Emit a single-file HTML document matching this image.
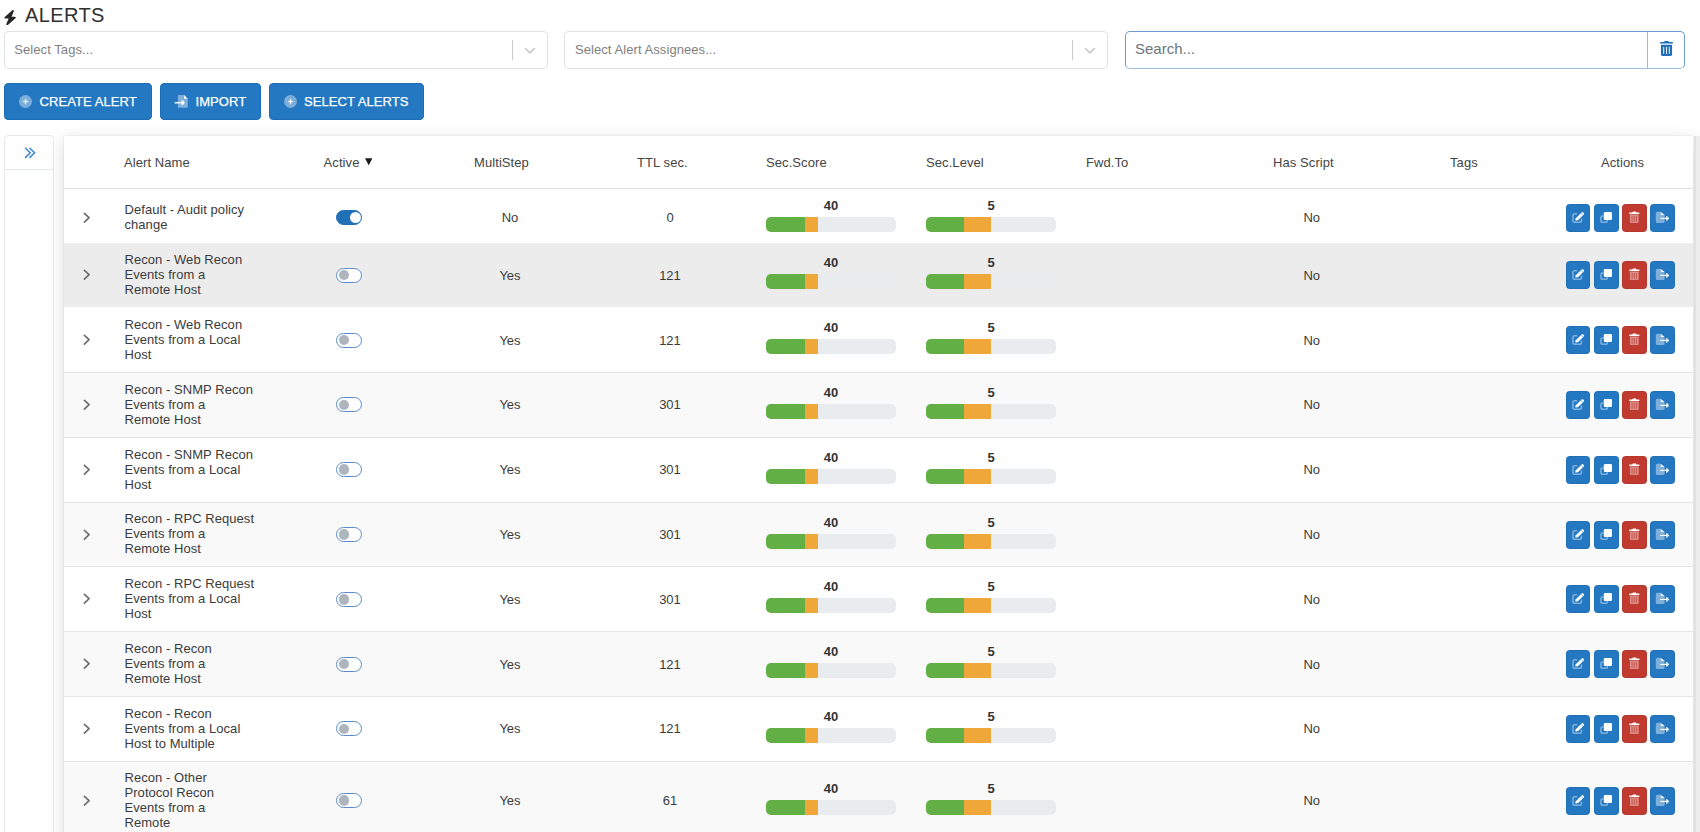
<!DOCTYPE html>
<html><head><meta charset="utf-8"><title>Alerts</title>
<style>
*{box-sizing:border-box;margin:0;padding:0}
html,body{width:1700px;height:832px;overflow:hidden;background:#fff;font-family:"Liberation Sans",sans-serif;color:#3b3b3b}
.abs{position:absolute}
.title{position:absolute;left:25px;top:3.3px;font-size:20px;line-height:24px;color:#303030;letter-spacing:0.38px}
.sel{position:absolute;top:31px;height:38px;border:1px solid #dfe3e8;border-radius:4px;background:#fff}
.sel .ph{position:absolute;left:9.3px;top:10px;font-size:13px;line-height:15px;color:#7f7f7f;letter-spacing:0.07px}
.sel .sep{position:absolute;top:7.5px;width:1px;height:20.5px;background:#cccccc}
.search{position:absolute;left:1125px;top:31px;width:560px;height:38px;border:1px solid #6b9bd3;border-bottom-color:#a3bddf;border-radius:5px;background:#fff}
.search .ph{position:absolute;left:9px;top:8px;font-size:15px;line-height:18px;color:#6c757d}
.search .div{position:absolute;left:521px;top:0;width:1px;height:36px;background:#9ab6db}
.btn{position:absolute;top:83px;height:37px;border-radius:4px;border:1px solid #1c6db6;background:#2478c2;color:#fff;font-size:13px;line-height:15px}
.btn svg{position:absolute;top:11px;margin-left:-1px}
.btn span{position:absolute;top:9.6px;margin-left:-1px;-webkit-text-stroke:0.25px #fff;letter-spacing:0.08px}
.side{position:absolute;left:4px;top:135px;width:50px;height:720px;border:1px solid #e9e9e9;border-radius:4px;background:#fff}
.side .hd{position:absolute;left:0;top:0;width:48px;height:34px;border-bottom:1px solid #e3e8ee}
.tbl{position:absolute;left:64px;top:136px;width:1629px;height:720px;background:#fff;box-shadow:0 0 2px rgba(0,0,0,.10),0 4px 16px rgba(0,0,0,.15)}
.th{position:absolute;top:155px;font-size:13px;line-height:15px;color:#444;letter-spacing:0.08px}
.hb{position:absolute;left:64px;top:188px;width:1629px;height:1px;background:#e2e2e2}
.row{position:absolute;left:64px;width:1629px}
.rb{position:absolute;left:64px;width:1629px;height:1px;background:#e3e3e3}
.name{position:absolute;left:124.5px;font-size:13px;line-height:15px;color:#3b3b3b;white-space:nowrap;letter-spacing:0.05px}
.ctr{position:absolute;text-align:center;font-size:13px;line-height:15px;color:#3b3b3b}
.tg{position:absolute;left:336.1px;width:26.3px;height:15px;border-radius:8px}
.tg i{position:absolute;border-radius:50%}
.tg.on{background:#2170b6;border:1px solid #2170b6}
.tg.on i{left:12.6px;top:1px;width:11.2px;height:11.2px;background:#fff}
.tg.off{background:#fff;border:1px solid #5a8ccb}
.tg.off i{left:1.6px;top:1.2px;width:10.6px;height:10.6px;background:#adb5bd}
.pv{position:absolute;width:130px;text-align:center;font-size:13px;line-height:15px;font-weight:bold;color:#333}
.pb{position:absolute;width:130px;height:15px;border-radius:5px;background:#e9ecef;overflow:hidden;display:flex}
.pb b{display:block;height:15px}
.ab{position:absolute;width:24.6px;height:28px;border-radius:4px;line-height:0;box-shadow:inset 0 0 0 0.8px rgba(0,0,0,.08)}
</style></head><body>
<svg class="abs" style="left:4.15px;top:9.55px" width="12.2" height="15.2" viewBox="30 0 388 512"><path fill="#262626" d="M349.4 44.6c5.9-13.7 1.5-29.7-10.6-38.5s-28.6-8-39.9 1.8l-256 224c-10 8.8-13.6 22.9-8.9 35.3S50.7 288 64 288H175.5L98.6 467.4c-5.9 13.7-1.5 29.7 10.6 38.5s28.6 8 39.9-1.8l256-224c10-8.8 13.6-22.9 8.9-35.3s-16.6-20.7-30-20.7H272.5L349.4 44.6z"/></svg>
<div class="title">ALERTS</div>

<div class="sel" style="left:4px;width:544px"><div class="ph">Select Tags...</div><div class="sep" style="left:507px"></div>
<svg class="abs" style="left:519px;top:15px" width="12" height="8" viewBox="0 0 12 8"><path d="M1.2 1.2 l4.8 4.6 l4.8 -4.6" fill="none" stroke="#cacaca" stroke-width="1.6"/></svg></div>
<div class="sel" style="left:564px;width:544px"><div class="ph" style="left:10px">Select Alert Assignees...</div><div class="sep" style="left:507px"></div>
<svg class="abs" style="left:519px;top:15px" width="12" height="8" viewBox="0 0 12 8"><path d="M1.2 1.2 l4.8 4.6 l4.8 -4.6" fill="none" stroke="#cacaca" stroke-width="1.6"/></svg></div>
<div class="search"><div class="ph">Search...</div><div class="div"></div>
<div class="abs" style="left:533.6px;top:8.6px;line-height:0"><svg width="13" height="15" viewBox="0 0 448 512"><path fill="#1f6fba" d="M32 464a48 48 0 0 0 48 48h288a48 48 0 0 0 48-48V128H32zm272-256a16 16 0 0 1 32 0v224a16 16 0 0 1-32 0zm-96 0a16 16 0 0 1 32 0v224a16 16 0 0 1-32 0zm-96 0a16 16 0 0 1 32 0v224a16 16 0 0 1-32 0zM432 32H312l-9.4-18.7A24 24 0 0 0 281.1 0H166.8a23.72 23.72 0 0 0-21.4 13.3L136 32H16A16 16 0 0 0 0 48v16a16 16 0 0 0 16 16h416a16 16 0 0 0 16-16V48a16 16 0 0 0-16-16z"/></svg></div></div>

<div class="btn" style="left:4px;width:148px"><svg style="left:15px" width="13" height="13" viewBox="0 0 13 13"><circle cx="6.5" cy="6.5" r="6.5" fill="rgba(255,255,255,.4)"/><path d="M6.5 4.3 v4.4 M4.3 6.5 h4.4" stroke="#fff" stroke-width="1.2" stroke-linecap="round"/></svg><span style="left:35.5px">CREATE ALERT</span></div>
<div class="btn" style="left:160px;width:101px"><svg style="left:14px" width="14" height="14" viewBox="0 0 14 14"><path d="M3.9 1.0 a1 1 0 0 1 1 -1 H9.9 V3.7 H13.8 V11.7 a1 1 0 0 1 -1 1 H4.9 a1 1 0 0 1 -1 -1 V8.5 H6.5 V6.9 H3.9 Z" fill="rgba(255,255,255,.42)"/><path d="M10.0 0 L13.8 3.7 H10.0 Z" fill="#fff"/><path d="M1.3 7.7 H10.0 M8.2 5.9 L10.0 7.7 L8.2 9.5" fill="none" stroke="#fff" stroke-width="1.5" stroke-linecap="round" stroke-linejoin="round"/></svg><span style="left:35.5px">IMPORT</span></div>
<div class="btn" style="left:269px;width:155px"><svg style="left:15px" width="13" height="13" viewBox="0 0 13 13"><circle cx="6.5" cy="6.5" r="6.5" fill="rgba(255,255,255,.4)"/><path d="M6.5 4.3 v4.4 M4.3 6.5 h4.4" stroke="#fff" stroke-width="1.2" stroke-linecap="round"/></svg><span style="left:35px">SELECT ALERTS</span></div>

<div class="side"><div class="hd"><svg class="abs" style="left:18.2px;top:10px" width="16" height="14" viewBox="0 0 16 14"><path d="M2.6 2.2 L7.3 6.8 L2.6 11.4 M6.9 2.2 L11.6 6.8 L6.9 11.4" fill="none" stroke="#3a87d4" stroke-width="1.5" stroke-linecap="round" stroke-linejoin="round"/></svg></div></div>
<div class="tbl"></div>
<div class="abs" style="left:1693.6px;top:136px;width:7px;height:700px;background:linear-gradient(90deg,#e2e2e2 0,#e2e2e2 1.6px,#ededed 2.4px,#ededed 100%)"></div>
<div class="th" style="left:124px">Alert Name</div>
<div class="th" style="left:323.6px">Active</div>
<svg class="abs" style="left:364.5px;top:157.8px" width="7.4" height="7.4" viewBox="0 0 7.4 7.4"><path d="M0 0.2 H7.4 L3.7 7.3 Z" fill="#1a1a1a"/></svg>
<div class="th" style="left:474px">MultiStep</div>
<div class="th" style="left:637px">TTL sec.</div>
<div class="th" style="left:766px">Sec.Score</div>
<div class="th" style="left:926px">Sec.Level</div>
<div class="th" style="left:1086px">Fwd.To</div>
<div class="th" style="left:1273px">Has Script</div>
<div class="th" style="left:1450px">Tags</div>
<div class="th" style="left:1601px">Actions</div>
<div class="hb"></div>
<div class="row" style="top:189px;height:53px;background:#ffffff"></div>
<div class="rb" style="top:242px;background:#fff"></div>
<svg class="abs" style="left:80px;top:209.7px" width="12" height="16" viewBox="0 0 12 16"><path d="M4.4 3.3 L9.1 7.7 L4.4 12.1" fill="none" stroke="#6e6e6e" stroke-width="1.7" stroke-linecap="round" stroke-linejoin="round"/></svg>
<div class="name" style="top:202.4px">Default - Audit policy<br>change</div>
<div class="tg on" style="top:210.2px"><i></i></div>
<div class="ctr" style="left:430px;width:160px;top:210.2px">No</div>
<div class="ctr" style="left:590px;width:160px;top:210.2px">0</div>
<div class="pv" style="left:766px;top:197.7px">40</div>
<div class="pb" style="left:766px;top:216.7px"><b style="width:39px;background:#62b045"></b><b style="width:13px;background:#f0a73a"></b></div>
<div class="pv" style="left:926px;top:197.7px">5</div>
<div class="pb" style="left:926px;top:216.7px"><b style="width:38.4px;background:#62b045"></b><b style="width:26.5px;background:#f0a73a"></b></div>
<div class="ctr" style="left:1231.7px;width:160px;top:210.2px">No</div>
<div class="ab" style="left:1565.9px;top:203.79999999999998px;background:#2478c2"><svg width="25" height="28" viewBox="0 0 25 28"><path d="M11.2 9.85 H8.7 a1.75 1.75 0 0 0 -1.75 1.75 V16.6 a1.75 1.75 0 0 0 1.75 1.75 H13.7 a1.75 1.75 0 0 0 1.75 -1.75 V14.6" fill="none" stroke="rgba(255,255,255,.42)" stroke-width="1.5"/><path d="M9.2 16.4 L9.8 14.2 L15.6 8.4 a1.1 1.1 0 0 1 1.55 0 L17.75 9.0 a1.1 1.1 0 0 1 0 1.55 L11.95 16.35 Z" fill="#fff"/><path d="M15.0 9.2 L16.9 11.1" stroke="#2478c2" stroke-width="0.6"/></svg></div>
<div class="ab" style="left:1594.1px;top:203.79999999999998px;background:#2478c2"><svg width="25" height="28" viewBox="0 0 25 28"><path d="M9.6 11.95 H8.5 a1.55 1.55 0 0 0 -1.55 1.55 V16.8 a1.55 1.55 0 0 0 1.55 1.55 H11.8 a1.55 1.55 0 0 0 1.55 -1.55 V16.0" fill="none" stroke="rgba(255,255,255,.42)" stroke-width="1.5"/><rect x="9.8" y="7.9" width="8.2" height="8.1" rx="1.3" fill="#fff"/></svg></div>
<div class="ab" style="left:1622.3px;top:203.79999999999998px;background:#c03a30"><svg width="25" height="28" viewBox="0 0 25 28"><path fill-rule="evenodd" d="M7.9 10.6 H16.7 V17.9 a1.2 1.2 0 0 1 -1.2 1.2 H9.1 a1.2 1.2 0 0 1 -1.2 -1.2 Z M9.75 12.0 h0.6 v5.8 h-0.6 Z M11.85 12.0 h0.6 v5.8 h-0.6 Z M13.95 12.0 h0.6 v5.8 h-0.6 Z" fill="rgba(255,255,255,.42)"/><path d="M7.7 8.6 H10.4 L10.9 7.6 H13.9 L14.4 8.6 H17.0 a0.5 0.5 0 0 1 0.5 0.5 V9.6 a0.4 0.4 0 0 1 -0.4 0.4 H7.6 a0.4 0.4 0 0 1 -0.4 -0.4 V9.1 a0.5 0.5 0 0 1 0.5 -0.5 Z" fill="#fff"/></svg></div>
<div class="ab" style="left:1650.4px;top:203.79999999999998px;background:#2478c2"><svg width="25" height="28" viewBox="0 0 25 28"><path d="M5.8 9.2 a1.5 1.5 0 0 1 1.5 -1.5 H10.4 V11.0 H14.6 V13.7 H10.6 V15.1 H14.6 V17.6 a1.5 1.5 0 0 1 -1.5 1.5 H7.3 a1.5 1.5 0 0 1 -1.5 -1.5 Z" fill="rgba(255,255,255,.42)"/><path d="M10.6 7.8 L14.6 11.0 H10.6 Z" fill="#fff"/><path d="M10.8 14.4 H18.3 M16.7 12.8 L18.4 14.4 L16.7 16.0" fill="none" stroke="#fff" stroke-width="1.3" stroke-linecap="round" stroke-linejoin="round"/></svg></div>
<div class="row" style="top:243px;height:64px;background:#ececec"></div>
<div class="rb" style="top:307px;background:#fff"></div>
<svg class="abs" style="left:80px;top:267.1px" width="12" height="16" viewBox="0 0 12 16"><path d="M4.4 3.3 L9.1 7.7 L4.4 12.1" fill="none" stroke="#6e6e6e" stroke-width="1.7" stroke-linecap="round" stroke-linejoin="round"/></svg>
<div class="name" style="top:251.90000000000003px">Recon - Web Recon<br>Events from a<br>Remote Host</div>
<div class="tg off" style="top:267.6px"><i></i></div>
<div class="ctr" style="left:430px;width:160px;top:267.6px">Yes</div>
<div class="ctr" style="left:590px;width:160px;top:267.6px">121</div>
<div class="pv" style="left:766px;top:255.10000000000002px">40</div>
<div class="pb" style="left:766px;top:274.1px"><b style="width:39px;background:#62b045"></b><b style="width:13px;background:#f0a73a"></b></div>
<div class="pv" style="left:926px;top:255.10000000000002px">5</div>
<div class="pb" style="left:926px;top:274.1px"><b style="width:38.4px;background:#62b045"></b><b style="width:26.5px;background:#f0a73a"></b></div>
<div class="ctr" style="left:1231.7px;width:160px;top:267.6px">No</div>
<div class="ab" style="left:1565.9px;top:261.20000000000005px;background:#2478c2"><svg width="25" height="28" viewBox="0 0 25 28"><path d="M11.2 9.85 H8.7 a1.75 1.75 0 0 0 -1.75 1.75 V16.6 a1.75 1.75 0 0 0 1.75 1.75 H13.7 a1.75 1.75 0 0 0 1.75 -1.75 V14.6" fill="none" stroke="rgba(255,255,255,.42)" stroke-width="1.5"/><path d="M9.2 16.4 L9.8 14.2 L15.6 8.4 a1.1 1.1 0 0 1 1.55 0 L17.75 9.0 a1.1 1.1 0 0 1 0 1.55 L11.95 16.35 Z" fill="#fff"/><path d="M15.0 9.2 L16.9 11.1" stroke="#2478c2" stroke-width="0.6"/></svg></div>
<div class="ab" style="left:1594.1px;top:261.20000000000005px;background:#2478c2"><svg width="25" height="28" viewBox="0 0 25 28"><path d="M9.6 11.95 H8.5 a1.55 1.55 0 0 0 -1.55 1.55 V16.8 a1.55 1.55 0 0 0 1.55 1.55 H11.8 a1.55 1.55 0 0 0 1.55 -1.55 V16.0" fill="none" stroke="rgba(255,255,255,.42)" stroke-width="1.5"/><rect x="9.8" y="7.9" width="8.2" height="8.1" rx="1.3" fill="#fff"/></svg></div>
<div class="ab" style="left:1622.3px;top:261.20000000000005px;background:#c03a30"><svg width="25" height="28" viewBox="0 0 25 28"><path fill-rule="evenodd" d="M7.9 10.6 H16.7 V17.9 a1.2 1.2 0 0 1 -1.2 1.2 H9.1 a1.2 1.2 0 0 1 -1.2 -1.2 Z M9.75 12.0 h0.6 v5.8 h-0.6 Z M11.85 12.0 h0.6 v5.8 h-0.6 Z M13.95 12.0 h0.6 v5.8 h-0.6 Z" fill="rgba(255,255,255,.42)"/><path d="M7.7 8.6 H10.4 L10.9 7.6 H13.9 L14.4 8.6 H17.0 a0.5 0.5 0 0 1 0.5 0.5 V9.6 a0.4 0.4 0 0 1 -0.4 0.4 H7.6 a0.4 0.4 0 0 1 -0.4 -0.4 V9.1 a0.5 0.5 0 0 1 0.5 -0.5 Z" fill="#fff"/></svg></div>
<div class="ab" style="left:1650.4px;top:261.20000000000005px;background:#2478c2"><svg width="25" height="28" viewBox="0 0 25 28"><path d="M5.8 9.2 a1.5 1.5 0 0 1 1.5 -1.5 H10.4 V11.0 H14.6 V13.7 H10.6 V15.1 H14.6 V17.6 a1.5 1.5 0 0 1 -1.5 1.5 H7.3 a1.5 1.5 0 0 1 -1.5 -1.5 Z" fill="rgba(255,255,255,.42)"/><path d="M10.6 7.8 L14.6 11.0 H10.6 Z" fill="#fff"/><path d="M10.8 14.4 H18.3 M16.7 12.8 L18.4 14.4 L16.7 16.0" fill="none" stroke="#fff" stroke-width="1.3" stroke-linecap="round" stroke-linejoin="round"/></svg></div>
<div class="row" style="top:308px;height:64px;background:#ffffff"></div>
<div class="rb" style="top:372px;background:#e4e4e4"></div>
<svg class="abs" style="left:80px;top:332.1px" width="12" height="16" viewBox="0 0 12 16"><path d="M4.4 3.3 L9.1 7.7 L4.4 12.1" fill="none" stroke="#6e6e6e" stroke-width="1.7" stroke-linecap="round" stroke-linejoin="round"/></svg>
<div class="name" style="top:316.90000000000003px">Recon - Web Recon<br>Events from a Local<br>Host</div>
<div class="tg off" style="top:332.6px"><i></i></div>
<div class="ctr" style="left:430px;width:160px;top:332.6px">Yes</div>
<div class="ctr" style="left:590px;width:160px;top:332.6px">121</div>
<div class="pv" style="left:766px;top:320.1px">40</div>
<div class="pb" style="left:766px;top:339.1px"><b style="width:39px;background:#62b045"></b><b style="width:13px;background:#f0a73a"></b></div>
<div class="pv" style="left:926px;top:320.1px">5</div>
<div class="pb" style="left:926px;top:339.1px"><b style="width:38.4px;background:#62b045"></b><b style="width:26.5px;background:#f0a73a"></b></div>
<div class="ctr" style="left:1231.7px;width:160px;top:332.6px">No</div>
<div class="ab" style="left:1565.9px;top:326.20000000000005px;background:#2478c2"><svg width="25" height="28" viewBox="0 0 25 28"><path d="M11.2 9.85 H8.7 a1.75 1.75 0 0 0 -1.75 1.75 V16.6 a1.75 1.75 0 0 0 1.75 1.75 H13.7 a1.75 1.75 0 0 0 1.75 -1.75 V14.6" fill="none" stroke="rgba(255,255,255,.42)" stroke-width="1.5"/><path d="M9.2 16.4 L9.8 14.2 L15.6 8.4 a1.1 1.1 0 0 1 1.55 0 L17.75 9.0 a1.1 1.1 0 0 1 0 1.55 L11.95 16.35 Z" fill="#fff"/><path d="M15.0 9.2 L16.9 11.1" stroke="#2478c2" stroke-width="0.6"/></svg></div>
<div class="ab" style="left:1594.1px;top:326.20000000000005px;background:#2478c2"><svg width="25" height="28" viewBox="0 0 25 28"><path d="M9.6 11.95 H8.5 a1.55 1.55 0 0 0 -1.55 1.55 V16.8 a1.55 1.55 0 0 0 1.55 1.55 H11.8 a1.55 1.55 0 0 0 1.55 -1.55 V16.0" fill="none" stroke="rgba(255,255,255,.42)" stroke-width="1.5"/><rect x="9.8" y="7.9" width="8.2" height="8.1" rx="1.3" fill="#fff"/></svg></div>
<div class="ab" style="left:1622.3px;top:326.20000000000005px;background:#c03a30"><svg width="25" height="28" viewBox="0 0 25 28"><path fill-rule="evenodd" d="M7.9 10.6 H16.7 V17.9 a1.2 1.2 0 0 1 -1.2 1.2 H9.1 a1.2 1.2 0 0 1 -1.2 -1.2 Z M9.75 12.0 h0.6 v5.8 h-0.6 Z M11.85 12.0 h0.6 v5.8 h-0.6 Z M13.95 12.0 h0.6 v5.8 h-0.6 Z" fill="rgba(255,255,255,.42)"/><path d="M7.7 8.6 H10.4 L10.9 7.6 H13.9 L14.4 8.6 H17.0 a0.5 0.5 0 0 1 0.5 0.5 V9.6 a0.4 0.4 0 0 1 -0.4 0.4 H7.6 a0.4 0.4 0 0 1 -0.4 -0.4 V9.1 a0.5 0.5 0 0 1 0.5 -0.5 Z" fill="#fff"/></svg></div>
<div class="ab" style="left:1650.4px;top:326.20000000000005px;background:#2478c2"><svg width="25" height="28" viewBox="0 0 25 28"><path d="M5.8 9.2 a1.5 1.5 0 0 1 1.5 -1.5 H10.4 V11.0 H14.6 V13.7 H10.6 V15.1 H14.6 V17.6 a1.5 1.5 0 0 1 -1.5 1.5 H7.3 a1.5 1.5 0 0 1 -1.5 -1.5 Z" fill="rgba(255,255,255,.42)"/><path d="M10.6 7.8 L14.6 11.0 H10.6 Z" fill="#fff"/><path d="M10.8 14.4 H18.3 M16.7 12.8 L18.4 14.4 L16.7 16.0" fill="none" stroke="#fff" stroke-width="1.3" stroke-linecap="round" stroke-linejoin="round"/></svg></div>
<div class="row" style="top:373px;height:64px;background:#f9f9f9"></div>
<div class="rb" style="top:437px;background:#e4e4e4"></div>
<svg class="abs" style="left:80px;top:396.9px" width="12" height="16" viewBox="0 0 12 16"><path d="M4.4 3.3 L9.1 7.7 L4.4 12.1" fill="none" stroke="#6e6e6e" stroke-width="1.7" stroke-linecap="round" stroke-linejoin="round"/></svg>
<div class="name" style="top:381.7px">Recon - SNMP Recon<br>Events from a<br>Remote Host</div>
<div class="tg off" style="top:397.4px"><i></i></div>
<div class="ctr" style="left:430px;width:160px;top:397.4px">Yes</div>
<div class="ctr" style="left:590px;width:160px;top:397.4px">301</div>
<div class="pv" style="left:766px;top:384.9px">40</div>
<div class="pb" style="left:766px;top:403.9px"><b style="width:39px;background:#62b045"></b><b style="width:13px;background:#f0a73a"></b></div>
<div class="pv" style="left:926px;top:384.9px">5</div>
<div class="pb" style="left:926px;top:403.9px"><b style="width:38.4px;background:#62b045"></b><b style="width:26.5px;background:#f0a73a"></b></div>
<div class="ctr" style="left:1231.7px;width:160px;top:397.4px">No</div>
<div class="ab" style="left:1565.9px;top:391.0px;background:#2478c2"><svg width="25" height="28" viewBox="0 0 25 28"><path d="M11.2 9.85 H8.7 a1.75 1.75 0 0 0 -1.75 1.75 V16.6 a1.75 1.75 0 0 0 1.75 1.75 H13.7 a1.75 1.75 0 0 0 1.75 -1.75 V14.6" fill="none" stroke="rgba(255,255,255,.42)" stroke-width="1.5"/><path d="M9.2 16.4 L9.8 14.2 L15.6 8.4 a1.1 1.1 0 0 1 1.55 0 L17.75 9.0 a1.1 1.1 0 0 1 0 1.55 L11.95 16.35 Z" fill="#fff"/><path d="M15.0 9.2 L16.9 11.1" stroke="#2478c2" stroke-width="0.6"/></svg></div>
<div class="ab" style="left:1594.1px;top:391.0px;background:#2478c2"><svg width="25" height="28" viewBox="0 0 25 28"><path d="M9.6 11.95 H8.5 a1.55 1.55 0 0 0 -1.55 1.55 V16.8 a1.55 1.55 0 0 0 1.55 1.55 H11.8 a1.55 1.55 0 0 0 1.55 -1.55 V16.0" fill="none" stroke="rgba(255,255,255,.42)" stroke-width="1.5"/><rect x="9.8" y="7.9" width="8.2" height="8.1" rx="1.3" fill="#fff"/></svg></div>
<div class="ab" style="left:1622.3px;top:391.0px;background:#c03a30"><svg width="25" height="28" viewBox="0 0 25 28"><path fill-rule="evenodd" d="M7.9 10.6 H16.7 V17.9 a1.2 1.2 0 0 1 -1.2 1.2 H9.1 a1.2 1.2 0 0 1 -1.2 -1.2 Z M9.75 12.0 h0.6 v5.8 h-0.6 Z M11.85 12.0 h0.6 v5.8 h-0.6 Z M13.95 12.0 h0.6 v5.8 h-0.6 Z" fill="rgba(255,255,255,.42)"/><path d="M7.7 8.6 H10.4 L10.9 7.6 H13.9 L14.4 8.6 H17.0 a0.5 0.5 0 0 1 0.5 0.5 V9.6 a0.4 0.4 0 0 1 -0.4 0.4 H7.6 a0.4 0.4 0 0 1 -0.4 -0.4 V9.1 a0.5 0.5 0 0 1 0.5 -0.5 Z" fill="#fff"/></svg></div>
<div class="ab" style="left:1650.4px;top:391.0px;background:#2478c2"><svg width="25" height="28" viewBox="0 0 25 28"><path d="M5.8 9.2 a1.5 1.5 0 0 1 1.5 -1.5 H10.4 V11.0 H14.6 V13.7 H10.6 V15.1 H14.6 V17.6 a1.5 1.5 0 0 1 -1.5 1.5 H7.3 a1.5 1.5 0 0 1 -1.5 -1.5 Z" fill="rgba(255,255,255,.42)"/><path d="M10.6 7.8 L14.6 11.0 H10.6 Z" fill="#fff"/><path d="M10.8 14.4 H18.3 M16.7 12.8 L18.4 14.4 L16.7 16.0" fill="none" stroke="#fff" stroke-width="1.3" stroke-linecap="round" stroke-linejoin="round"/></svg></div>
<div class="row" style="top:438px;height:64px;background:#ffffff"></div>
<div class="rb" style="top:502px;background:#e4e4e4"></div>
<svg class="abs" style="left:80px;top:461.70000000000005px" width="12" height="16" viewBox="0 0 12 16"><path d="M4.4 3.3 L9.1 7.7 L4.4 12.1" fill="none" stroke="#6e6e6e" stroke-width="1.7" stroke-linecap="round" stroke-linejoin="round"/></svg>
<div class="name" style="top:446.50000000000006px">Recon - SNMP Recon<br>Events from a Local<br>Host</div>
<div class="tg off" style="top:462.20000000000005px"><i></i></div>
<div class="ctr" style="left:430px;width:160px;top:462.20000000000005px">Yes</div>
<div class="ctr" style="left:590px;width:160px;top:462.20000000000005px">301</div>
<div class="pv" style="left:766px;top:449.70000000000005px">40</div>
<div class="pb" style="left:766px;top:468.70000000000005px"><b style="width:39px;background:#62b045"></b><b style="width:13px;background:#f0a73a"></b></div>
<div class="pv" style="left:926px;top:449.70000000000005px">5</div>
<div class="pb" style="left:926px;top:468.70000000000005px"><b style="width:38.4px;background:#62b045"></b><b style="width:26.5px;background:#f0a73a"></b></div>
<div class="ctr" style="left:1231.7px;width:160px;top:462.20000000000005px">No</div>
<div class="ab" style="left:1565.9px;top:455.80000000000007px;background:#2478c2"><svg width="25" height="28" viewBox="0 0 25 28"><path d="M11.2 9.85 H8.7 a1.75 1.75 0 0 0 -1.75 1.75 V16.6 a1.75 1.75 0 0 0 1.75 1.75 H13.7 a1.75 1.75 0 0 0 1.75 -1.75 V14.6" fill="none" stroke="rgba(255,255,255,.42)" stroke-width="1.5"/><path d="M9.2 16.4 L9.8 14.2 L15.6 8.4 a1.1 1.1 0 0 1 1.55 0 L17.75 9.0 a1.1 1.1 0 0 1 0 1.55 L11.95 16.35 Z" fill="#fff"/><path d="M15.0 9.2 L16.9 11.1" stroke="#2478c2" stroke-width="0.6"/></svg></div>
<div class="ab" style="left:1594.1px;top:455.80000000000007px;background:#2478c2"><svg width="25" height="28" viewBox="0 0 25 28"><path d="M9.6 11.95 H8.5 a1.55 1.55 0 0 0 -1.55 1.55 V16.8 a1.55 1.55 0 0 0 1.55 1.55 H11.8 a1.55 1.55 0 0 0 1.55 -1.55 V16.0" fill="none" stroke="rgba(255,255,255,.42)" stroke-width="1.5"/><rect x="9.8" y="7.9" width="8.2" height="8.1" rx="1.3" fill="#fff"/></svg></div>
<div class="ab" style="left:1622.3px;top:455.80000000000007px;background:#c03a30"><svg width="25" height="28" viewBox="0 0 25 28"><path fill-rule="evenodd" d="M7.9 10.6 H16.7 V17.9 a1.2 1.2 0 0 1 -1.2 1.2 H9.1 a1.2 1.2 0 0 1 -1.2 -1.2 Z M9.75 12.0 h0.6 v5.8 h-0.6 Z M11.85 12.0 h0.6 v5.8 h-0.6 Z M13.95 12.0 h0.6 v5.8 h-0.6 Z" fill="rgba(255,255,255,.42)"/><path d="M7.7 8.6 H10.4 L10.9 7.6 H13.9 L14.4 8.6 H17.0 a0.5 0.5 0 0 1 0.5 0.5 V9.6 a0.4 0.4 0 0 1 -0.4 0.4 H7.6 a0.4 0.4 0 0 1 -0.4 -0.4 V9.1 a0.5 0.5 0 0 1 0.5 -0.5 Z" fill="#fff"/></svg></div>
<div class="ab" style="left:1650.4px;top:455.80000000000007px;background:#2478c2"><svg width="25" height="28" viewBox="0 0 25 28"><path d="M5.8 9.2 a1.5 1.5 0 0 1 1.5 -1.5 H10.4 V11.0 H14.6 V13.7 H10.6 V15.1 H14.6 V17.6 a1.5 1.5 0 0 1 -1.5 1.5 H7.3 a1.5 1.5 0 0 1 -1.5 -1.5 Z" fill="rgba(255,255,255,.42)"/><path d="M10.6 7.8 L14.6 11.0 H10.6 Z" fill="#fff"/><path d="M10.8 14.4 H18.3 M16.7 12.8 L18.4 14.4 L16.7 16.0" fill="none" stroke="#fff" stroke-width="1.3" stroke-linecap="round" stroke-linejoin="round"/></svg></div>
<div class="row" style="top:503px;height:63px;background:#f9f9f9"></div>
<div class="rb" style="top:566px;background:#e4e4e4"></div>
<svg class="abs" style="left:80px;top:526.5px" width="12" height="16" viewBox="0 0 12 16"><path d="M4.4 3.3 L9.1 7.7 L4.4 12.1" fill="none" stroke="#6e6e6e" stroke-width="1.7" stroke-linecap="round" stroke-linejoin="round"/></svg>
<div class="name" style="top:511.3px">Recon - RPC Request<br>Events from a<br>Remote Host</div>
<div class="tg off" style="top:527.0px"><i></i></div>
<div class="ctr" style="left:430px;width:160px;top:527.0px">Yes</div>
<div class="ctr" style="left:590px;width:160px;top:527.0px">301</div>
<div class="pv" style="left:766px;top:514.5px">40</div>
<div class="pb" style="left:766px;top:533.5px"><b style="width:39px;background:#62b045"></b><b style="width:13px;background:#f0a73a"></b></div>
<div class="pv" style="left:926px;top:514.5px">5</div>
<div class="pb" style="left:926px;top:533.5px"><b style="width:38.4px;background:#62b045"></b><b style="width:26.5px;background:#f0a73a"></b></div>
<div class="ctr" style="left:1231.7px;width:160px;top:527.0px">No</div>
<div class="ab" style="left:1565.9px;top:520.6px;background:#2478c2"><svg width="25" height="28" viewBox="0 0 25 28"><path d="M11.2 9.85 H8.7 a1.75 1.75 0 0 0 -1.75 1.75 V16.6 a1.75 1.75 0 0 0 1.75 1.75 H13.7 a1.75 1.75 0 0 0 1.75 -1.75 V14.6" fill="none" stroke="rgba(255,255,255,.42)" stroke-width="1.5"/><path d="M9.2 16.4 L9.8 14.2 L15.6 8.4 a1.1 1.1 0 0 1 1.55 0 L17.75 9.0 a1.1 1.1 0 0 1 0 1.55 L11.95 16.35 Z" fill="#fff"/><path d="M15.0 9.2 L16.9 11.1" stroke="#2478c2" stroke-width="0.6"/></svg></div>
<div class="ab" style="left:1594.1px;top:520.6px;background:#2478c2"><svg width="25" height="28" viewBox="0 0 25 28"><path d="M9.6 11.95 H8.5 a1.55 1.55 0 0 0 -1.55 1.55 V16.8 a1.55 1.55 0 0 0 1.55 1.55 H11.8 a1.55 1.55 0 0 0 1.55 -1.55 V16.0" fill="none" stroke="rgba(255,255,255,.42)" stroke-width="1.5"/><rect x="9.8" y="7.9" width="8.2" height="8.1" rx="1.3" fill="#fff"/></svg></div>
<div class="ab" style="left:1622.3px;top:520.6px;background:#c03a30"><svg width="25" height="28" viewBox="0 0 25 28"><path fill-rule="evenodd" d="M7.9 10.6 H16.7 V17.9 a1.2 1.2 0 0 1 -1.2 1.2 H9.1 a1.2 1.2 0 0 1 -1.2 -1.2 Z M9.75 12.0 h0.6 v5.8 h-0.6 Z M11.85 12.0 h0.6 v5.8 h-0.6 Z M13.95 12.0 h0.6 v5.8 h-0.6 Z" fill="rgba(255,255,255,.42)"/><path d="M7.7 8.6 H10.4 L10.9 7.6 H13.9 L14.4 8.6 H17.0 a0.5 0.5 0 0 1 0.5 0.5 V9.6 a0.4 0.4 0 0 1 -0.4 0.4 H7.6 a0.4 0.4 0 0 1 -0.4 -0.4 V9.1 a0.5 0.5 0 0 1 0.5 -0.5 Z" fill="#fff"/></svg></div>
<div class="ab" style="left:1650.4px;top:520.6px;background:#2478c2"><svg width="25" height="28" viewBox="0 0 25 28"><path d="M5.8 9.2 a1.5 1.5 0 0 1 1.5 -1.5 H10.4 V11.0 H14.6 V13.7 H10.6 V15.1 H14.6 V17.6 a1.5 1.5 0 0 1 -1.5 1.5 H7.3 a1.5 1.5 0 0 1 -1.5 -1.5 Z" fill="rgba(255,255,255,.42)"/><path d="M10.6 7.8 L14.6 11.0 H10.6 Z" fill="#fff"/><path d="M10.8 14.4 H18.3 M16.7 12.8 L18.4 14.4 L16.7 16.0" fill="none" stroke="#fff" stroke-width="1.3" stroke-linecap="round" stroke-linejoin="round"/></svg></div>
<div class="row" style="top:567px;height:64px;background:#ffffff"></div>
<div class="rb" style="top:631px;background:#e4e4e4"></div>
<svg class="abs" style="left:80px;top:591.3px" width="12" height="16" viewBox="0 0 12 16"><path d="M4.4 3.3 L9.1 7.7 L4.4 12.1" fill="none" stroke="#6e6e6e" stroke-width="1.7" stroke-linecap="round" stroke-linejoin="round"/></svg>
<div class="name" style="top:576.0999999999999px">Recon - RPC Request<br>Events from a Local<br>Host</div>
<div class="tg off" style="top:591.8px"><i></i></div>
<div class="ctr" style="left:430px;width:160px;top:591.8px">Yes</div>
<div class="ctr" style="left:590px;width:160px;top:591.8px">301</div>
<div class="pv" style="left:766px;top:579.3px">40</div>
<div class="pb" style="left:766px;top:598.3px"><b style="width:39px;background:#62b045"></b><b style="width:13px;background:#f0a73a"></b></div>
<div class="pv" style="left:926px;top:579.3px">5</div>
<div class="pb" style="left:926px;top:598.3px"><b style="width:38.4px;background:#62b045"></b><b style="width:26.5px;background:#f0a73a"></b></div>
<div class="ctr" style="left:1231.7px;width:160px;top:591.8px">No</div>
<div class="ab" style="left:1565.9px;top:585.4px;background:#2478c2"><svg width="25" height="28" viewBox="0 0 25 28"><path d="M11.2 9.85 H8.7 a1.75 1.75 0 0 0 -1.75 1.75 V16.6 a1.75 1.75 0 0 0 1.75 1.75 H13.7 a1.75 1.75 0 0 0 1.75 -1.75 V14.6" fill="none" stroke="rgba(255,255,255,.42)" stroke-width="1.5"/><path d="M9.2 16.4 L9.8 14.2 L15.6 8.4 a1.1 1.1 0 0 1 1.55 0 L17.75 9.0 a1.1 1.1 0 0 1 0 1.55 L11.95 16.35 Z" fill="#fff"/><path d="M15.0 9.2 L16.9 11.1" stroke="#2478c2" stroke-width="0.6"/></svg></div>
<div class="ab" style="left:1594.1px;top:585.4px;background:#2478c2"><svg width="25" height="28" viewBox="0 0 25 28"><path d="M9.6 11.95 H8.5 a1.55 1.55 0 0 0 -1.55 1.55 V16.8 a1.55 1.55 0 0 0 1.55 1.55 H11.8 a1.55 1.55 0 0 0 1.55 -1.55 V16.0" fill="none" stroke="rgba(255,255,255,.42)" stroke-width="1.5"/><rect x="9.8" y="7.9" width="8.2" height="8.1" rx="1.3" fill="#fff"/></svg></div>
<div class="ab" style="left:1622.3px;top:585.4px;background:#c03a30"><svg width="25" height="28" viewBox="0 0 25 28"><path fill-rule="evenodd" d="M7.9 10.6 H16.7 V17.9 a1.2 1.2 0 0 1 -1.2 1.2 H9.1 a1.2 1.2 0 0 1 -1.2 -1.2 Z M9.75 12.0 h0.6 v5.8 h-0.6 Z M11.85 12.0 h0.6 v5.8 h-0.6 Z M13.95 12.0 h0.6 v5.8 h-0.6 Z" fill="rgba(255,255,255,.42)"/><path d="M7.7 8.6 H10.4 L10.9 7.6 H13.9 L14.4 8.6 H17.0 a0.5 0.5 0 0 1 0.5 0.5 V9.6 a0.4 0.4 0 0 1 -0.4 0.4 H7.6 a0.4 0.4 0 0 1 -0.4 -0.4 V9.1 a0.5 0.5 0 0 1 0.5 -0.5 Z" fill="#fff"/></svg></div>
<div class="ab" style="left:1650.4px;top:585.4px;background:#2478c2"><svg width="25" height="28" viewBox="0 0 25 28"><path d="M5.8 9.2 a1.5 1.5 0 0 1 1.5 -1.5 H10.4 V11.0 H14.6 V13.7 H10.6 V15.1 H14.6 V17.6 a1.5 1.5 0 0 1 -1.5 1.5 H7.3 a1.5 1.5 0 0 1 -1.5 -1.5 Z" fill="rgba(255,255,255,.42)"/><path d="M10.6 7.8 L14.6 11.0 H10.6 Z" fill="#fff"/><path d="M10.8 14.4 H18.3 M16.7 12.8 L18.4 14.4 L16.7 16.0" fill="none" stroke="#fff" stroke-width="1.3" stroke-linecap="round" stroke-linejoin="round"/></svg></div>
<div class="row" style="top:632px;height:64px;background:#f9f9f9"></div>
<div class="rb" style="top:696px;background:#e4e4e4"></div>
<svg class="abs" style="left:80px;top:656.1px" width="12" height="16" viewBox="0 0 12 16"><path d="M4.4 3.3 L9.1 7.7 L4.4 12.1" fill="none" stroke="#6e6e6e" stroke-width="1.7" stroke-linecap="round" stroke-linejoin="round"/></svg>
<div class="name" style="top:640.9px">Recon - Recon<br>Events from a<br>Remote Host</div>
<div class="tg off" style="top:656.6px"><i></i></div>
<div class="ctr" style="left:430px;width:160px;top:656.6px">Yes</div>
<div class="ctr" style="left:590px;width:160px;top:656.6px">121</div>
<div class="pv" style="left:766px;top:644.1px">40</div>
<div class="pb" style="left:766px;top:663.1px"><b style="width:39px;background:#62b045"></b><b style="width:13px;background:#f0a73a"></b></div>
<div class="pv" style="left:926px;top:644.1px">5</div>
<div class="pb" style="left:926px;top:663.1px"><b style="width:38.4px;background:#62b045"></b><b style="width:26.5px;background:#f0a73a"></b></div>
<div class="ctr" style="left:1231.7px;width:160px;top:656.6px">No</div>
<div class="ab" style="left:1565.9px;top:650.2px;background:#2478c2"><svg width="25" height="28" viewBox="0 0 25 28"><path d="M11.2 9.85 H8.7 a1.75 1.75 0 0 0 -1.75 1.75 V16.6 a1.75 1.75 0 0 0 1.75 1.75 H13.7 a1.75 1.75 0 0 0 1.75 -1.75 V14.6" fill="none" stroke="rgba(255,255,255,.42)" stroke-width="1.5"/><path d="M9.2 16.4 L9.8 14.2 L15.6 8.4 a1.1 1.1 0 0 1 1.55 0 L17.75 9.0 a1.1 1.1 0 0 1 0 1.55 L11.95 16.35 Z" fill="#fff"/><path d="M15.0 9.2 L16.9 11.1" stroke="#2478c2" stroke-width="0.6"/></svg></div>
<div class="ab" style="left:1594.1px;top:650.2px;background:#2478c2"><svg width="25" height="28" viewBox="0 0 25 28"><path d="M9.6 11.95 H8.5 a1.55 1.55 0 0 0 -1.55 1.55 V16.8 a1.55 1.55 0 0 0 1.55 1.55 H11.8 a1.55 1.55 0 0 0 1.55 -1.55 V16.0" fill="none" stroke="rgba(255,255,255,.42)" stroke-width="1.5"/><rect x="9.8" y="7.9" width="8.2" height="8.1" rx="1.3" fill="#fff"/></svg></div>
<div class="ab" style="left:1622.3px;top:650.2px;background:#c03a30"><svg width="25" height="28" viewBox="0 0 25 28"><path fill-rule="evenodd" d="M7.9 10.6 H16.7 V17.9 a1.2 1.2 0 0 1 -1.2 1.2 H9.1 a1.2 1.2 0 0 1 -1.2 -1.2 Z M9.75 12.0 h0.6 v5.8 h-0.6 Z M11.85 12.0 h0.6 v5.8 h-0.6 Z M13.95 12.0 h0.6 v5.8 h-0.6 Z" fill="rgba(255,255,255,.42)"/><path d="M7.7 8.6 H10.4 L10.9 7.6 H13.9 L14.4 8.6 H17.0 a0.5 0.5 0 0 1 0.5 0.5 V9.6 a0.4 0.4 0 0 1 -0.4 0.4 H7.6 a0.4 0.4 0 0 1 -0.4 -0.4 V9.1 a0.5 0.5 0 0 1 0.5 -0.5 Z" fill="#fff"/></svg></div>
<div class="ab" style="left:1650.4px;top:650.2px;background:#2478c2"><svg width="25" height="28" viewBox="0 0 25 28"><path d="M5.8 9.2 a1.5 1.5 0 0 1 1.5 -1.5 H10.4 V11.0 H14.6 V13.7 H10.6 V15.1 H14.6 V17.6 a1.5 1.5 0 0 1 -1.5 1.5 H7.3 a1.5 1.5 0 0 1 -1.5 -1.5 Z" fill="rgba(255,255,255,.42)"/><path d="M10.6 7.8 L14.6 11.0 H10.6 Z" fill="#fff"/><path d="M10.8 14.4 H18.3 M16.7 12.8 L18.4 14.4 L16.7 16.0" fill="none" stroke="#fff" stroke-width="1.3" stroke-linecap="round" stroke-linejoin="round"/></svg></div>
<div class="row" style="top:697px;height:64px;background:#ffffff"></div>
<div class="rb" style="top:761px;background:#e4e4e4"></div>
<svg class="abs" style="left:80px;top:720.9px" width="12" height="16" viewBox="0 0 12 16"><path d="M4.4 3.3 L9.1 7.7 L4.4 12.1" fill="none" stroke="#6e6e6e" stroke-width="1.7" stroke-linecap="round" stroke-linejoin="round"/></svg>
<div class="name" style="top:705.6999999999999px">Recon - Recon<br>Events from a Local<br>Host to Multiple</div>
<div class="tg off" style="top:721.4px"><i></i></div>
<div class="ctr" style="left:430px;width:160px;top:721.4px">Yes</div>
<div class="ctr" style="left:590px;width:160px;top:721.4px">121</div>
<div class="pv" style="left:766px;top:708.9px">40</div>
<div class="pb" style="left:766px;top:727.9px"><b style="width:39px;background:#62b045"></b><b style="width:13px;background:#f0a73a"></b></div>
<div class="pv" style="left:926px;top:708.9px">5</div>
<div class="pb" style="left:926px;top:727.9px"><b style="width:38.4px;background:#62b045"></b><b style="width:26.5px;background:#f0a73a"></b></div>
<div class="ctr" style="left:1231.7px;width:160px;top:721.4px">No</div>
<div class="ab" style="left:1565.9px;top:715.0px;background:#2478c2"><svg width="25" height="28" viewBox="0 0 25 28"><path d="M11.2 9.85 H8.7 a1.75 1.75 0 0 0 -1.75 1.75 V16.6 a1.75 1.75 0 0 0 1.75 1.75 H13.7 a1.75 1.75 0 0 0 1.75 -1.75 V14.6" fill="none" stroke="rgba(255,255,255,.42)" stroke-width="1.5"/><path d="M9.2 16.4 L9.8 14.2 L15.6 8.4 a1.1 1.1 0 0 1 1.55 0 L17.75 9.0 a1.1 1.1 0 0 1 0 1.55 L11.95 16.35 Z" fill="#fff"/><path d="M15.0 9.2 L16.9 11.1" stroke="#2478c2" stroke-width="0.6"/></svg></div>
<div class="ab" style="left:1594.1px;top:715.0px;background:#2478c2"><svg width="25" height="28" viewBox="0 0 25 28"><path d="M9.6 11.95 H8.5 a1.55 1.55 0 0 0 -1.55 1.55 V16.8 a1.55 1.55 0 0 0 1.55 1.55 H11.8 a1.55 1.55 0 0 0 1.55 -1.55 V16.0" fill="none" stroke="rgba(255,255,255,.42)" stroke-width="1.5"/><rect x="9.8" y="7.9" width="8.2" height="8.1" rx="1.3" fill="#fff"/></svg></div>
<div class="ab" style="left:1622.3px;top:715.0px;background:#c03a30"><svg width="25" height="28" viewBox="0 0 25 28"><path fill-rule="evenodd" d="M7.9 10.6 H16.7 V17.9 a1.2 1.2 0 0 1 -1.2 1.2 H9.1 a1.2 1.2 0 0 1 -1.2 -1.2 Z M9.75 12.0 h0.6 v5.8 h-0.6 Z M11.85 12.0 h0.6 v5.8 h-0.6 Z M13.95 12.0 h0.6 v5.8 h-0.6 Z" fill="rgba(255,255,255,.42)"/><path d="M7.7 8.6 H10.4 L10.9 7.6 H13.9 L14.4 8.6 H17.0 a0.5 0.5 0 0 1 0.5 0.5 V9.6 a0.4 0.4 0 0 1 -0.4 0.4 H7.6 a0.4 0.4 0 0 1 -0.4 -0.4 V9.1 a0.5 0.5 0 0 1 0.5 -0.5 Z" fill="#fff"/></svg></div>
<div class="ab" style="left:1650.4px;top:715.0px;background:#2478c2"><svg width="25" height="28" viewBox="0 0 25 28"><path d="M5.8 9.2 a1.5 1.5 0 0 1 1.5 -1.5 H10.4 V11.0 H14.6 V13.7 H10.6 V15.1 H14.6 V17.6 a1.5 1.5 0 0 1 -1.5 1.5 H7.3 a1.5 1.5 0 0 1 -1.5 -1.5 Z" fill="rgba(255,255,255,.42)"/><path d="M10.6 7.8 L14.6 11.0 H10.6 Z" fill="#fff"/><path d="M10.8 14.4 H18.3 M16.7 12.8 L18.4 14.4 L16.7 16.0" fill="none" stroke="#fff" stroke-width="1.3" stroke-linecap="round" stroke-linejoin="round"/></svg></div>
<div class="row" style="top:762px;height:80px;background:#f9f9f9"></div>
<div class="rb" style="top:842px;background:#e4e4e4"></div>
<svg class="abs" style="left:80px;top:792.7px" width="12" height="16" viewBox="0 0 12 16"><path d="M4.4 3.3 L9.1 7.7 L4.4 12.1" fill="none" stroke="#6e6e6e" stroke-width="1.7" stroke-linecap="round" stroke-linejoin="round"/></svg>
<div class="name" style="top:770.0px">Recon - Other<br>Protocol Recon<br>Events from a<br>Remote</div>
<div class="tg off" style="top:793.2px"><i></i></div>
<div class="ctr" style="left:430px;width:160px;top:793.2px">Yes</div>
<div class="ctr" style="left:590px;width:160px;top:793.2px">61</div>
<div class="pv" style="left:766px;top:780.7px">40</div>
<div class="pb" style="left:766px;top:799.7px"><b style="width:39px;background:#62b045"></b><b style="width:13px;background:#f0a73a"></b></div>
<div class="pv" style="left:926px;top:780.7px">5</div>
<div class="pb" style="left:926px;top:799.7px"><b style="width:38.4px;background:#62b045"></b><b style="width:26.5px;background:#f0a73a"></b></div>
<div class="ctr" style="left:1231.7px;width:160px;top:793.2px">No</div>
<div class="ab" style="left:1565.9px;top:786.8000000000001px;background:#2478c2"><svg width="25" height="28" viewBox="0 0 25 28"><path d="M11.2 9.85 H8.7 a1.75 1.75 0 0 0 -1.75 1.75 V16.6 a1.75 1.75 0 0 0 1.75 1.75 H13.7 a1.75 1.75 0 0 0 1.75 -1.75 V14.6" fill="none" stroke="rgba(255,255,255,.42)" stroke-width="1.5"/><path d="M9.2 16.4 L9.8 14.2 L15.6 8.4 a1.1 1.1 0 0 1 1.55 0 L17.75 9.0 a1.1 1.1 0 0 1 0 1.55 L11.95 16.35 Z" fill="#fff"/><path d="M15.0 9.2 L16.9 11.1" stroke="#2478c2" stroke-width="0.6"/></svg></div>
<div class="ab" style="left:1594.1px;top:786.8000000000001px;background:#2478c2"><svg width="25" height="28" viewBox="0 0 25 28"><path d="M9.6 11.95 H8.5 a1.55 1.55 0 0 0 -1.55 1.55 V16.8 a1.55 1.55 0 0 0 1.55 1.55 H11.8 a1.55 1.55 0 0 0 1.55 -1.55 V16.0" fill="none" stroke="rgba(255,255,255,.42)" stroke-width="1.5"/><rect x="9.8" y="7.9" width="8.2" height="8.1" rx="1.3" fill="#fff"/></svg></div>
<div class="ab" style="left:1622.3px;top:786.8000000000001px;background:#c03a30"><svg width="25" height="28" viewBox="0 0 25 28"><path fill-rule="evenodd" d="M7.9 10.6 H16.7 V17.9 a1.2 1.2 0 0 1 -1.2 1.2 H9.1 a1.2 1.2 0 0 1 -1.2 -1.2 Z M9.75 12.0 h0.6 v5.8 h-0.6 Z M11.85 12.0 h0.6 v5.8 h-0.6 Z M13.95 12.0 h0.6 v5.8 h-0.6 Z" fill="rgba(255,255,255,.42)"/><path d="M7.7 8.6 H10.4 L10.9 7.6 H13.9 L14.4 8.6 H17.0 a0.5 0.5 0 0 1 0.5 0.5 V9.6 a0.4 0.4 0 0 1 -0.4 0.4 H7.6 a0.4 0.4 0 0 1 -0.4 -0.4 V9.1 a0.5 0.5 0 0 1 0.5 -0.5 Z" fill="#fff"/></svg></div>
<div class="ab" style="left:1650.4px;top:786.8000000000001px;background:#2478c2"><svg width="25" height="28" viewBox="0 0 25 28"><path d="M5.8 9.2 a1.5 1.5 0 0 1 1.5 -1.5 H10.4 V11.0 H14.6 V13.7 H10.6 V15.1 H14.6 V17.6 a1.5 1.5 0 0 1 -1.5 1.5 H7.3 a1.5 1.5 0 0 1 -1.5 -1.5 Z" fill="rgba(255,255,255,.42)"/><path d="M10.6 7.8 L14.6 11.0 H10.6 Z" fill="#fff"/><path d="M10.8 14.4 H18.3 M16.7 12.8 L18.4 14.4 L16.7 16.0" fill="none" stroke="#fff" stroke-width="1.3" stroke-linecap="round" stroke-linejoin="round"/></svg></div>

</body></html>
